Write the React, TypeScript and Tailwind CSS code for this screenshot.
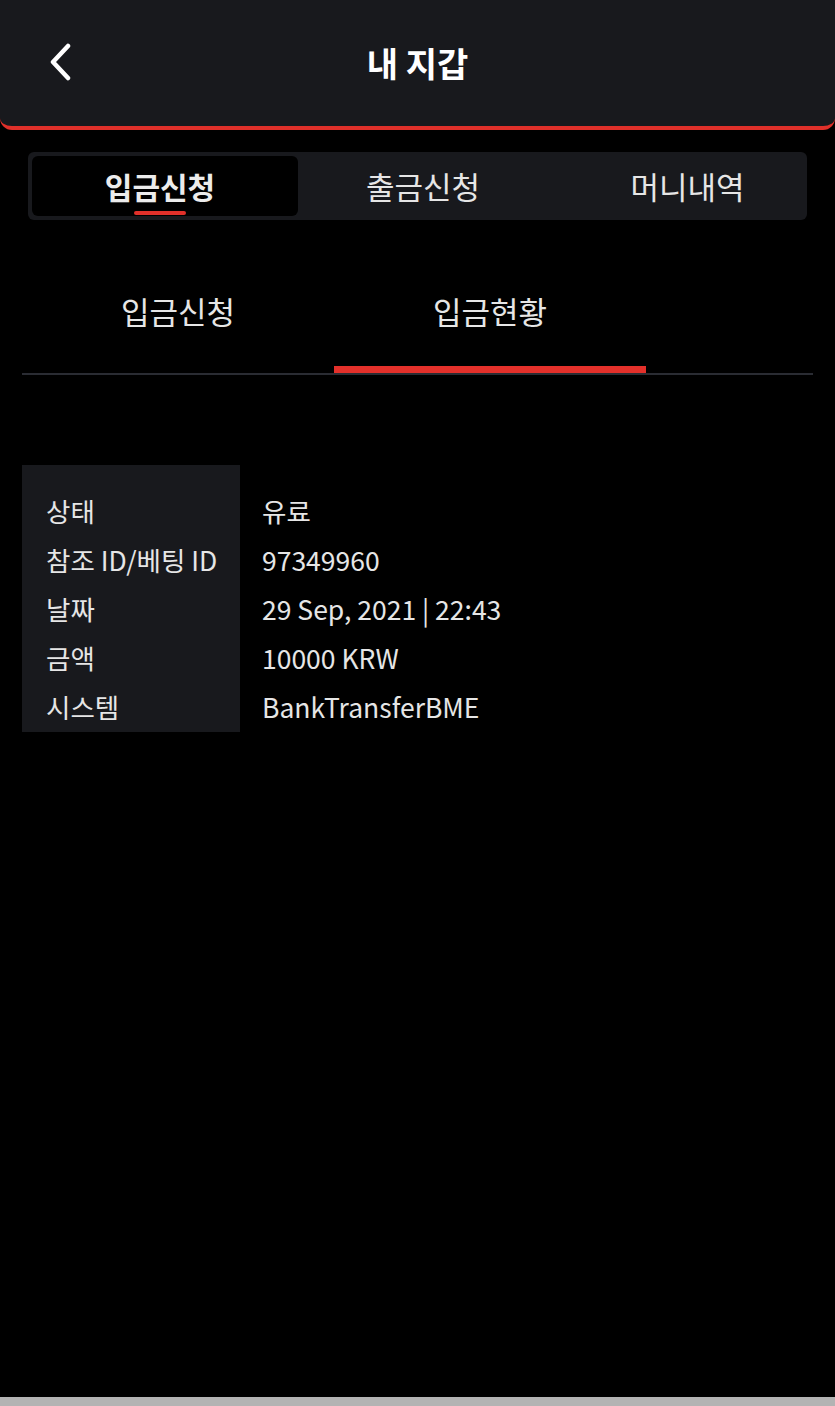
const font = { fontFamily: '"Noto Sans CJK KR", "Noto Sans", sans-serif' };

const rows = [
  { label: "상태", value: "유료" },
  { label: "참조 ID/베팅 ID", value: "97349960" },
  { label: "날짜", value: "29 Sep, 2021 | 22:43" },
  { label: "금액", value: "10000 KRW" },
  { label: "시스템", value: "BankTransferBME" },
];

export default function App() {
  return (
    <div className="flex h-[1406px] w-full flex-col bg-black text-[#e6e6e6]" style={font}>
      {/* 헤더 */}
      <header className="relative flex h-[130px] shrink-0 items-center justify-center rounded-b-xl border-b-4 border-[#e0302a] bg-[#18191d]">
        <button className="absolute left-[48px] top-[43px] text-white">
          <svg width="26" height="38" viewBox="0 0 26 38" fill="none">
            <path d="M20 3 L5 19 L20 35" stroke="white" strokeWidth="4.5" strokeLinecap="round" strokeLinejoin="round" />
          </svg>
        </button>
        <h1 className="-mt-[2px] text-[34px] font-bold text-white">내 지갑</h1>
      </header>

      {/* 상단 탭 */}
      <div className="mx-[28px] mt-[22px] flex h-[68px] rounded-md bg-[#18191d] p-[4px]">
        <div className="relative flex w-[266px] items-center justify-center rounded-md bg-black">
          <span className="pr-[10px] text-[30px] font-bold text-[#ececec]">입금신청</span>
          <span className="absolute bottom-[1px] left-[102px] h-[4px] w-[52px] rounded-full bg-[#e0302a]" />
        </div>
        <div className="flex w-[250px] items-center justify-center">
          <span className="text-[31px] text-[#e6e6e6]">출금신청</span>
        </div>
        <div className="flex flex-1 items-center justify-center pl-[24px]">
          <span className="text-[31px] text-[#e6e6e6]">머니내역</span>
        </div>
      </div>

      {/* 하위 탭 */}
      <div className="mx-[22px] mt-[50px] flex border-b-2 border-[#2a2c33]">
        <div className="flex h-[103px] w-[312px] justify-center pt-[22px]">
          <span className="text-[31px] leading-[38px]">입금신청</span>
        </div>
        <div className="relative flex h-[103px] w-[312px] justify-center pt-[22px]">
          <span className="text-[31px] leading-[38px]">입금현황</span>
          <span className="absolute bottom-0 left-0 h-[7px] w-full bg-[#e3302a]" />
        </div>
      </div>

      {/* 상세 */}
      <div className="mx-[22px] mt-[90px] flex">
        <div className="w-[218px] bg-[#18191d] pb-[1px] pl-[24px] pt-[21px]">
          {rows.map((r) => (
            <div key={r.label} className="flex h-[49px] items-center whitespace-nowrap text-[26.5px]">
              {r.label}
            </div>
          ))}
        </div>
        <div className="pl-[22px] pt-[21px]">
          {rows.map((r) => (
            <div key={r.label} className="flex h-[49px] items-center whitespace-nowrap text-[26.5px]">
              {r.value}
            </div>
          ))}
        </div>
      </div>

      <div className="mt-auto h-[9px] shrink-0 bg-[#b3b3b3]" />
    </div>
  );
}
